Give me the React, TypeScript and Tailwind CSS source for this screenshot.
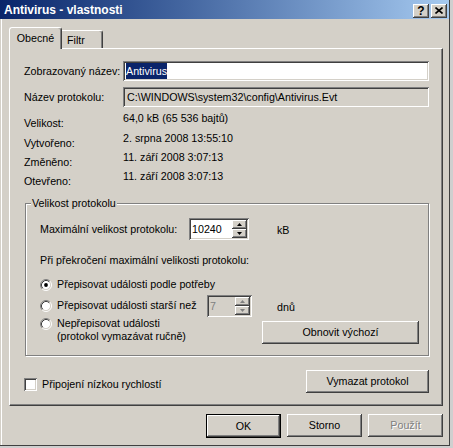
import React from 'react';

const raised =
  'shadow-[inset_-1px_-1px_#404040,inset_1px_1px_#ffffff,inset_-2px_-2px_#808080,inset_2px_2px_#d4d0c8]';
const sunken =
  'shadow-[inset_1px_1px_#808080,inset_-1px_-1px_#ffffff,inset_2px_2px_#404040,inset_-2px_-2px_#d4d0c8]';
const disabledText = 'text-[#808080] [text-shadow:1px_1px_#ffffff]';

function Button({ label, w, disabled, isDefault }: { label: string; w: string; disabled?: boolean; isDefault?: boolean }) {
  if (isDefault) {
    return (
      <div className={`${w} h-[24px] border border-black bg-[#d4d0c8]`}>
        <div className={`h-full w-full flex items-center justify-center ${raised}`}>{label}</div>
      </div>
    );
  }
  return (
    <div className={`${w} h-[23px] flex items-center justify-center bg-[#d4d0c8] ${raised} ${disabled ? disabledText : ''}`}>
      {label}
    </div>
  );
}

function Arrow({ up, disabled }: { up?: boolean; disabled?: boolean }) {
  return (
    <svg width="5" height="3" viewBox="0 0 5 3">
      <path d={up ? 'M2.5 0L5 3H0Z' : 'M0 0H5L2.5 3Z'} fill={disabled ? '#808080' : '#000'} />
    </svg>
  );
}

function Spin({ value, disabled, w }: { value: string; disabled?: boolean; w: string }) {
  return (
    <div className={`${w} shrink-0 h-[22px] flex p-[2px] ${disabled ? 'bg-[#d4d0c8]' : 'bg-white'} ${sunken}`}>
      <div className={`flex-1 pl-[1px] leading-[18px] ${disabled ? 'text-[#808080]' : ''}`}>{value}</div>
      <div className="w-[15px] flex flex-col">
        <div className={`h-[9px] flex items-center justify-center bg-[#d4d0c8] ${raised}`}>
          <Arrow up disabled={disabled} />
        </div>
        <div className={`h-[9px] flex items-center justify-center bg-[#d4d0c8] ${raised}`}>
          <Arrow disabled={disabled} />
        </div>
      </div>
    </div>
  );
}

function Radio({ checked }: { checked?: boolean }) {
  return (
    <svg width="12" height="12" viewBox="0 0 12 12" className="shrink-0">
      <circle cx="6" cy="6" r="4.5" fill="#fff" />
      <path d="M2.11 9.89A5.5 5.5 0 0 1 9.89 2.11" stroke="#808080" fill="none" />
      <path d="M9.89 2.11A5.5 5.5 0 0 1 2.11 9.89" stroke="#fff" fill="none" />
      <path d="M2.82 9.18A4.5 4.5 0 0 1 9.18 2.82" stroke="#404040" fill="none" />
      <path d="M9.18 2.82A4.5 4.5 0 0 1 2.82 9.18" stroke="#d4d0c8" fill="none" />
      {checked && <circle cx="6" cy="6" r="1.9" fill="#000" />}
    </svg>
  );
}

const info = [
  ['Velikost:', '64,0 kB (65 536 bajtů)', 'h-[20px]'],
  ['Vytvořeno:', '2. srpna 2008 13:55:10', 'h-[19px]'],
  ['Změněno:', '11. září 2008 3:07:13', 'h-[19px]'],
  ['Otevřeno:', '11. září 2008 3:07:13', 'h-[19px]'],
];

export default function App() {
  return (
    <div className="w-[453px] h-[448px] bg-[#cfcfcf] text-[10.7px] leading-[13px] text-black whitespace-nowrap font-['Liberation_Sans',Arial,sans-serif] select-none">
      <div className="w-[450px] h-[446px] bg-[#d4d0c8] border-r border-b border-[#404040] flex flex-col">
        {/* title bar */}
        <div className="h-[19px] shrink-0 flex items-center pl-[4px] pr-[2px] bg-linear-to-r from-[#0a246a] to-[#a6caf0]">
          <span className="text-white font-bold text-[12px] mt-[2px]">Antivirus - vlastnosti</span>
          <div className="ml-auto flex gap-[2px] mt-[2px]">
            <div className={`w-[16px] h-[14px] bg-[#d4d0c8] flex items-center justify-center font-bold text-[12px] leading-[12px] ${raised}`}>?</div>
            <div className={`w-[16px] h-[14px] bg-[#d4d0c8] flex items-center justify-center ${raised}`}>
              <svg width="8" height="7" viewBox="0 0 8 7">
                <path d="M0.5 0.5L7.5 6.5M7.5 0.5L0.5 6.5" stroke="#000" strokeWidth="1.6" />
              </svg>
            </div>
          </div>
        </div>

        {/* body */}
        <div className="flex-1 ml-[1px] border-l border-white pl-[7px] pt-[8px]">
          {/* tabs */}
          <div className="flex items-end h-[21px]">
            <div className="relative z-10 -mb-[1px] w-[53px] h-[22px] bg-[#d4d0c8] border-l border-t border-r border-white border-r-[#404040] rounded-t-[3px] shadow-[inset_-1px_0_#808080] flex justify-center pt-[4px]">
              Obecné
            </div>
            <div className="w-[41px] h-[18px] border-t border-r border-white border-r-[#404040] rounded-tr-[3px] shadow-[inset_-1px_0_#808080] pl-[5px] pt-[3px]">
              Filtr
            </div>
          </div>

          {/* panel */}
          <div className="w-[434px] h-[358px] border border-white border-r-[#404040] border-b-[#404040] shadow-[inset_-1px_-1px_#808080] pl-[14px] pr-[13px] pt-[12px] flex flex-col">
            <div className="flex items-center h-[20px]">
              <span className="w-[99px] shrink-0">Zobrazovaný název:</span>
              <div className={`flex-1 h-[20px] bg-white p-[2px] pl-[3px] ${sunken}`}>
                <span className="bg-[#0a246a] text-white leading-[16px] inline-block">Antivirus</span>
              </div>
            </div>
            <div className="flex items-center h-[20px] mt-[6px]">
              <span className="w-[99px] shrink-0">Název protokolu:</span>
              <div className={`flex-1 h-[20px] p-[2px] pl-[4px] leading-[16px] ${sunken}`}>C:\WINDOWS\system32\config\Antivirus.Evt</div>
            </div>

            <div className="mt-[2px] flex flex-col">
              {info.map(([label, value, h]) => (
                <div key={label} className={`flex ${h}`}>
                  <span className="w-[99px] shrink-0 pt-[8px]">{label}</span>
                  <span className="pt-[3px]">{value}</span>
                </div>
              ))}
            </div>

            {/* group box */}
            <div className="relative ml-[1px] mt-[17px] h-[153px] border border-[#808080] shadow-[inset_1px_1px_#ffffff,1px_1px_#ffffff] pl-[14px] pt-[14px] flex flex-col">
              <span className="absolute -top-[7px] left-[5px] bg-[#d4d0c8] px-[1px]">Velikost protokolu</span>
              <div className="flex items-center h-[22px]">
                <span className="w-[149px] shrink-0">Maximální velikost protokolu:</span>
                <Spin value="10240" w="w-[60px]" />
                <span className="ml-[28px] mt-[3px]">kB</span>
              </div>
              <div className="mt-[14px]">Při překročení maximální velikosti protokolu:</div>
              <div className="mt-[8px] h-[19px] flex items-center gap-[5px]">
                <Radio checked />
                <span>Přepisovat události podle potřeby</span>
              </div>
              <div className="h-[23px] flex items-center">
                <Radio />
                <span className="ml-[5px] w-[150px] shrink-0">Přepisovat události starší než</span>
                <Spin value="7" disabled w="w-[45px]" />
                <span className="ml-[25px] mt-[3px]">dnů</span>
              </div>
              <div className="flex pr-[9px]">
                <div className="mt-[1px]">
                  <Radio />
                </div>
                <div className="ml-[5px]">
                  Nepřepisovat události
                  <br />
                  (protokol vymazávat ručně)
                </div>
                <div className="ml-auto mt-[4px]">
                  <Button label="Obnovit výchozí" w="w-[157px]" />
                </div>
              </div>
            </div>

            <div className="mt-[14px] flex items-start">
              <div className={`mt-[8px] w-[13px] h-[13px] bg-white ${sunken}`} />
              <span className="ml-[5px] mt-[8px]">Připojení nízkou rychlostí</span>
              <div className="ml-auto">
                <Button label="Vymazat protokol" w="w-[123px]" />
              </div>
            </div>
          </div>

          {/* dialog buttons */}
          <div className="w-[434px] mt-[8px] flex justify-end gap-[6px]">
            <Button label="OK" w="w-[75px]" isDefault />
            <Button label="Storno" w="w-[75px]" />
            <Button label="Použít" w="w-[75px]" disabled />
          </div>
        </div>
      </div>
    </div>
  );
}
